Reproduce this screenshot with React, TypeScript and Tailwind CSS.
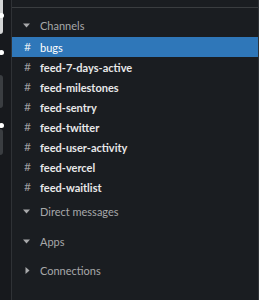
import type { ReactNode } from 'react';

const channels = [
  'bugs',
  'feed-7-days-active',
  'feed-milestones',
  'feed-sentry',
  'feed-twitter',
  'feed-user-activity',
  'feed-vercel',
  'feed-waitlist',
];

function Caret({ open }: { open: boolean }) {
  return open ? (
    <svg width="7" height="5" viewBox="0 0 7 5" className="text-[#a8a9ab]">
      <path d="M0 0.5h7L3.5 4.5z" fill="currentColor" />
    </svg>
  ) : (
    <svg width="5" height="7" viewBox="0 0 5 7" className="text-[#a8a9ab]">
      <path d="M0.5 0v7L4.5 3.5z" fill="currentColor" />
    </svg>
  );
}

function Section({ label, open = true, className = '' }: { label: string; open?: boolean; className?: string }) {
  return (
    <div className={`flex h-5 items-center ${className}`}>
      <span className="flex w-[28px] justify-end pr-[10px]">
        <Caret open={open} />
      </span>
      <span className="text-[11px] text-[#a7a8aa]">{label}</span>
    </div>
  );
}

function Dot({ top }: { top: string }) {
  return <span className={`absolute left-[-1px] h-[5px] w-[5px] rounded-full bg-white ${top}`} />;
}

function Strip({ children }: { children: ReactNode }) {
  return <div className="relative w-[11px] shrink-0 bg-[#17191d]">{children}</div>;
}

export default function App() {
  return (
    <div className="flex h-[300px] w-[259px] bg-[#1a1d21] font-['Lato',sans-serif] leading-none">
      <Strip>
        <span className="absolute left-[-6px] top-[-4px] h-[38px] w-[9px] rounded-[3px] bg-[#d4d5d6]" />
        <span className="absolute left-[-6px] top-[75px] h-[33px] w-[9px] rounded-[3px] bg-[#3a3d41]" />
        <span className="absolute left-[-6px] top-[129px] h-[26px] w-[9px] rounded-[3px] bg-[#3a3d41]" />
        <Dot top="top-[13px]" />
        <Dot top="top-[50px]" />
        <Dot top="top-[123px]" />
      </Strip>
      <div className="flex flex-1 flex-col border-l border-r border-[#2f3236]">
        <div className="h-[8px] border-b border-[#3a3d40]" />
        <Section label="Channels" className="mt-[7px]" />
        <div className="mt-[2px] flex flex-col">
          {channels.map((name) => (
            <div
              key={name}
              className={`flex h-[20px] items-center ${name === 'bugs' ? 'bg-[#2f77b9] text-white' : 'text-[#e8e8e9]'}`}
            >
              <span
                className={`w-[28px] pr-[9px] text-right text-[12px] ${name === 'bugs' ? 'text-[#dfe8f2]' : 'text-[#9a9b9d]'}`}
              >
                #
              </span>
              <span className={`text-[11px] ${name === 'bugs' ? 'font-normal' : 'font-bold'}`}>{name}</span>
            </div>
          ))}
        </div>
        <Section label="Direct messages" className="mt-[4px]" />
        <Section label="Apps" className="mt-[10px]" />
        <Section label="Connections" open={false} className="mt-[9px]" />
      </div>
    </div>
  );
}
